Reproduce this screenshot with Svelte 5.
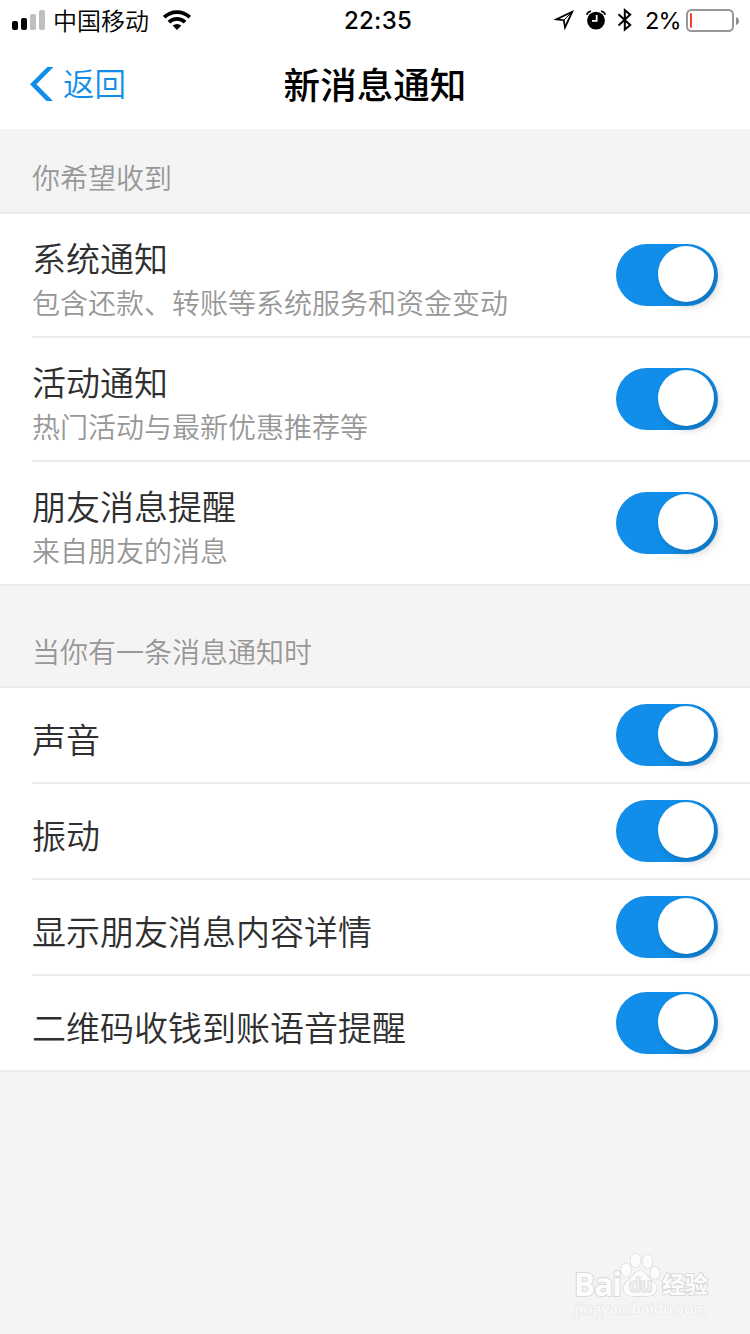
<script>
  const receive = [
    { title: '系统通知', note: '包含还款、转账等系统服务和资金变动' },
    { title: '活动通知', note: '热门活动与最新优惠推荐等' },
    { title: '朋友消息提醒', note: '来自朋友的消息' }
  ];
  const alerts = ['声音', '振动', '显示朋友消息内容详情', '二维码收钱到账语音提醒'];
</script>

<div class="screen">
  <header>
    <div class="status">
      <svg class="signal" width="34" height="20" viewBox="0 0 34 20">
        <rect x="0" y="11" width="6" height="9" rx="2" />
        <rect x="9" y="8" width="6" height="12" rx="2" />
        <rect x="18" y="4" width="6" height="16" rx="2" fill="#bfbfbf" />
        <rect x="27" y="0" width="6" height="20" rx="2" fill="#bfbfbf" />
      </svg>
      <span class="carrier">中国移动</span>
      <svg class="wifi" width="28" height="20" viewBox="0 0 28 20">
        <g fill="none" stroke="#000" stroke-width="3.8">
          <path d="M1.2 7.2A18.5 18.5 0 0 1 26.8 7.2" />
          <path d="M5.9 12.2A11.5 11.5 0 0 1 22.1 12.2" />
        </g>
        <path d="M9.6 15.6A6.5 6.5 0 0 1 18.4 15.6L14 20Z" />
      </svg>
      <time>22:35</time>
      <div class="right">
        <svg width="20" height="22" viewBox="0 0 20 22">
          <path d="M18.2 2.8L2.4 10.4L9.8 11.2L11 18.4Z" fill="none" stroke="#000" stroke-width="1.8" />
          <path d="M18.2 2.8L9.8 11.2" stroke="#000" stroke-width="1" />
        </svg>
        <svg class="alarm" width="20" height="20" viewBox="0 0 20 20">
          <circle cx="10" cy="10.6" r="8.9" />
          <path d="M.7 4.8Q1.5 2 5 1.2M19.3 4.8Q18.5 2 15 1.2" fill="none" stroke="#000" stroke-width="1.8" />
          <path d="M10.7 5V10.8H6" fill="none" stroke="#fff" stroke-width="1.7" />
        </svg>
        <svg class="bluetooth" width="16" height="24" viewBox="0 0 16 24">
          <path d="M1.5 6.2L13.2 17L7.8 21.6V2.2L13.2 6.6L1.5 17.4" fill="none" stroke="#000" stroke-width="2" />
        </svg>
        <span class="percent">2%</span>
        <svg class="battery" width="54" height="24" viewBox="0 0 54 24">
          <rect x="1" y="1" width="46" height="21" rx="4.5" fill="#fff" stroke="#979797" stroke-width="2" />
          <rect x="4" y="4" width="2" height="15" rx="1" fill="#ff3b30" />
          <path d="M50 8Q53 9 53 12T50 16Z" fill="#8e8e8e" />
        </svg>
      </div>
    </div>
    <nav>
      <div class="back">
        <svg width="24" height="34" viewBox="0 0 24 34">
          <path d="M17.3 0H23.5L6.5 17.2L23 34H16.5L0 17.2Z" fill="#108ee9" />
        </svg>
        <span>返回</span>
      </div>
      <h1>新消息通知</h1>
    </nav>
  </header>

  <h2 class="first">你希望收到</h2>
  <section>
    {#each receive as item}
      <div class="row tall">
        <div class="label">
          <div class="title">{item.title}</div>
          <div class="note">{item.note}</div>
        </div>
        <div class="switch"><i></i></div>
      </div>
    {/each}
  </section>

  <h2 class="second">当你有一条消息通知时</h2>
  <section>
    {#each alerts as title}
      <div class="row">
        <div class="title">{title}</div>
        <div class="switch"><i></i></div>
      </div>
    {/each}
  </section>

  <footer>
    <div class="brand">
      <span class="bai">Bai</span>
      <svg width="42" height="46" viewBox="0 0 42 46">
        <g fill="#fcfcfc" stroke="#d4d4d4" stroke-width="1.2">
          <ellipse cx="6" cy="17" rx="5" ry="6.7" />
          <ellipse cx="15.5" cy="7.5" rx="5" ry="6.9" />
          <ellipse cx="27.5" cy="8.5" rx="5" ry="6.7" />
          <ellipse cx="35" cy="20" rx="4.8" ry="6.5" />
          <path d="M20 18C25 18 27 23 31 27C35 30 38 33 36 38C34 44 27 43 20 43C12 43 7 44 4 38C2 32 7 29 11 25C14 21 16 18 20 18Z" />
        </g>
        <text x="9" y="38.5">du</text>
      </svg>
      <span class="jy">经验</span>
    </div>
    <div class="site">jingyan.baidu.com</div>
  </footer>
</div>

<style>
  :global(body) { margin: 0; background: #f4f4f4; }
  .screen {
    box-sizing: border-box;
    width: 750px;
    height: 1334px;
    overflow: hidden;
    display: flex;
    flex-direction: column;
    background: #f4f4f4;
    font-family: "Noto Sans CJK SC", sans-serif;
    color: #2f2f2f;
  }
  h1, h2 { margin: 0; }
  header { height: 129px; flex: none; background: #fff; color: #000; }
  .status {
    height: 40px;
    display: grid;
    grid-template-columns: 34px 96px 28px 1fr auto;
    grid-template-rows: 40px;
    padding: 0 10px 0 12px;
    align-items: center;
  }
  .carrier { font-size: 24px; line-height: 40px; margin-left: 7px; white-space: nowrap; font-weight: 350; }
  .wifi { margin-left: 21px; }
  .status time {
    justify-self: center;
    font: 500 24px/38px Inter, sans-serif;
    padding-top: 2px;
    letter-spacing: .3px;
    margin-left: 32px;
  }
  .right { display: flex; align-items: center; height: 40px; }
  .alarm { margin-left: 12px; }
  .bluetooth { margin-left: 11px; }
  .percent { font: 400 23.5px/38px Inter, sans-serif; padding-top: 2px; letter-spacing: -.8px; margin-left: 12px; width: 33px; white-space: nowrap; }
  .battery { margin: 1px 0 0 8px; }
  nav { height: 88px; display: grid; grid-template-columns: 1fr auto 1fr; align-items: center; }
  .back { display: flex; align-items: center; padding-left: 30px; gap: 9px; color: #108ee9; font-size: 31.5px; font-weight: 350; }
  .back span { line-height: 46px; padding-bottom: 4px; }
  h1 { font-size: 36.6px; font-weight: 500; line-height: 54px; padding-bottom: 1px; }
  h2 { flex: none; box-sizing: border-box; font-size: 28px; font-weight: 350; line-height: 42px; color: #979797; padding-left: 32px; }
  .first { height: 83px; padding-top: 27px; }
  .second { height: 100px; padding-top: 44px; }
  section { flex: none; background: #fff; border-top: 2px solid #ececec; border-bottom: 2px solid #ececec; }
  .row {
    height: 94px;
    margin-left: 32px;
    padding-right: 32px;
    display: flex;
    justify-content: space-between;
    align-items: center;
  }
  .row + .row { border-top: 2px solid #ececec; }
  .tall { height: 122px; }
  .title { font-size: 34px; line-height: 48px; font-weight: 350; padding-top: 8px; }
  .label { padding-top: 7px; }
  .tall .title { padding: 0; line-height: 46px; }
  .note { font-size: 28px; line-height: 42px; font-weight: 350; color: #979797; }
  .switch { width: 102px; height: 62px; box-sizing: border-box; border-radius: 31px; background: #108ee9; padding: 2px 4px; display: flex; justify-content: flex-end; }
  .switch i { width: 56px; height: 56px; border-radius: 50%; background: #fff; box-shadow: 4px 4px 8px rgba(0, 0, 0, .2); }
  footer { width: 136px; margin: 181px 0 0 574px; color: #fcfcfc; -webkit-text-stroke: 2px #d9d9d9; paint-order: stroke fill; }
  .brand { display: flex; height: 46px; }
  .bai { font: 700 31.5px/30px "Open Sans", sans-serif; padding-top: 16px; width: 46px; letter-spacing: -1px; white-space: nowrap; }
  .brand text { font: 700 19px "Open Sans", sans-serif; fill: #eee; stroke: #cfcfcf; letter-spacing: -1px; stroke-width: 1.2px; -webkit-text-stroke: 0; }
  .jy { font-size: 23px; font-weight: 700; line-height: 30px; padding-top: 15px; white-space: nowrap; }
  .site { font: 600 15px/18px "Open Sans", sans-serif; padding-left: 1px; white-space: nowrap; -webkit-text-stroke: 1px #e0e0e0; }
</style>
